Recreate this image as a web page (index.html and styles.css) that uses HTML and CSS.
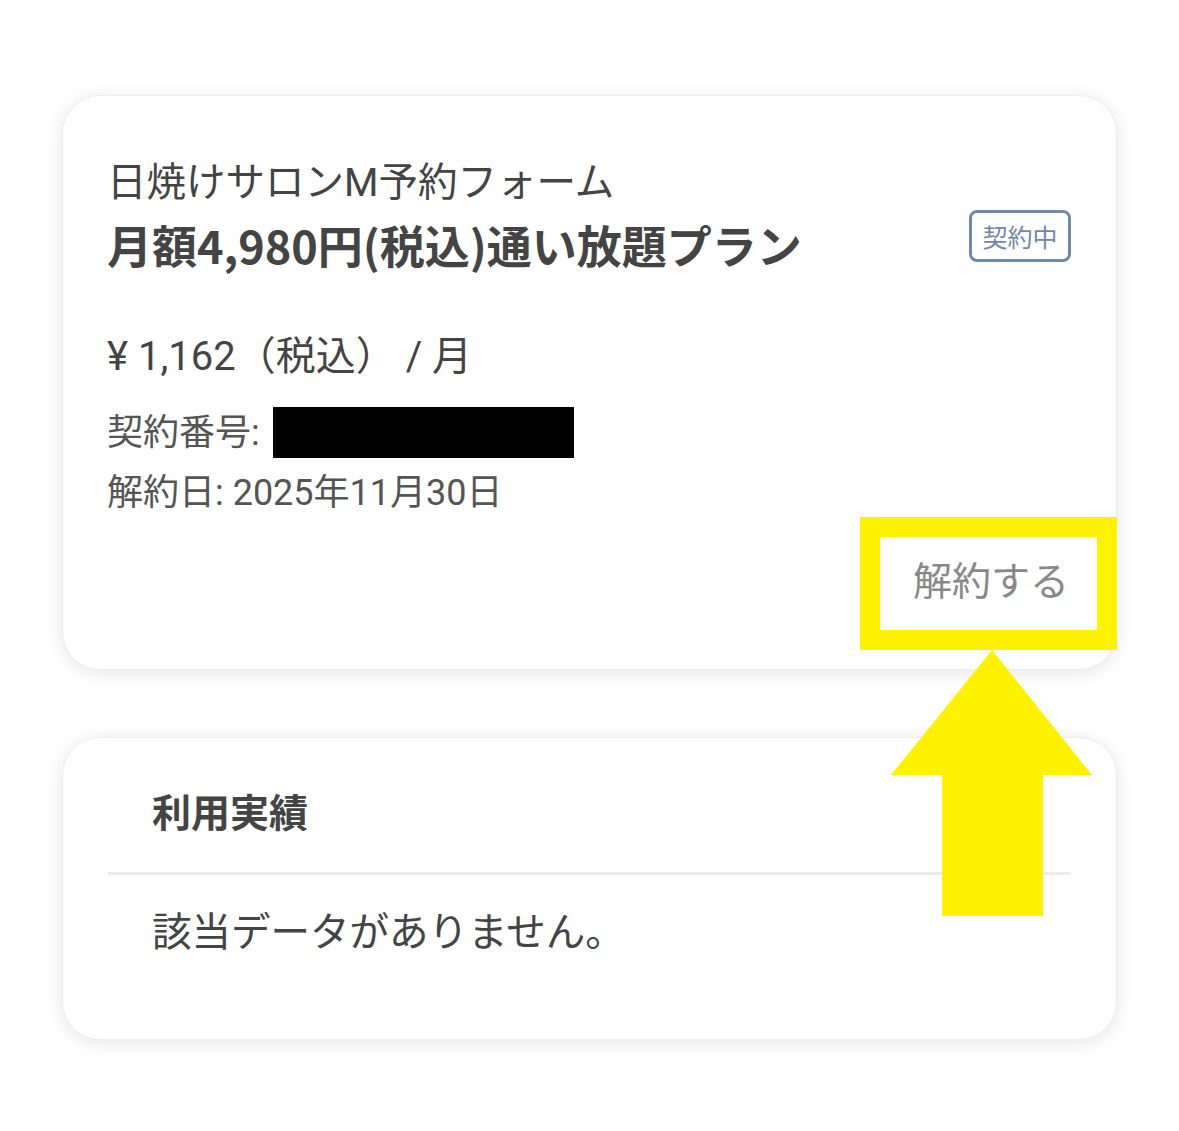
FILE: index.html
```html
<!DOCTYPE html>
<html lang="ja">
<head>
    <meta charset="UTF-8">
    <meta name="viewport" content="width=device-width, initial-scale=1.0">
    <title>契約情報</title>
    <link rel="stylesheet" href="styles.css">
</head>
<body>
    <div class="page">
        <!-- 契約カード -->
        <div class="card contract-card">
            <div class="contract-head">
                <div class="contract-titles">
                    <div class="shop-name">日焼けサロンM予約フォーム</div>
                    <div class="plan-name">月額4,980円(税込)通い放題プラン</div>
                </div>
                <span class="status-badge">契約中</span>
            </div>
            <div class="price">¥ 1,162（税込） / 月</div>
            <div class="info-row number-row">契約番号: <span class="masked"></span></div>
            <div class="info-row">解約日: 2025年11月30日</div>
            <div class="action-row">
                <button class="cancel-button">解約する</button>
            </div>
        </div>

        <!-- 利用実績 -->
        <div class="card history-card">
            <div class="history-title">利用実績</div>
            <div class="history-body">該当データがありません。</div>
        </div>

        <!-- 注釈 -->
        <svg class="annotation" width="1179" height="1131" viewBox="0 0 1179 1131">
            <rect x="870" y="527" width="237" height="113" fill="none" stroke="#fff200" stroke-width="20"/>
            <polygon points="992,650 1092,775 1043,775 1043,916 942,916 942,775 891,775" fill="#fff200"/>
        </svg>
    </div>
</body>
</html>
```

FILE: styles.css
```css
body {
    margin: 0;
    background: #fff;
    font-family: 'Roboto', 'Noto Sans CJK JP', sans-serif;
    color: #444;
}

.page {
    position: relative;
    width: 1179px;
    height: 1131px;
    padding: 95px 62px 0;
    box-sizing: border-box;
}

.card {
    background: #fff;
    border-radius: 38px;
    box-shadow: 0 3px 18px rgba(0, 0, 0, 0.1);
    border: 1px solid #eee;
    box-sizing: border-box;
}

.contract-card {
    height: 575px;
    padding: 63px 45px 0 44px;
}

.contract-head {
    display: flex;
    justify-content: space-between;
    align-items: flex-start;
}

.shop-name {
    font-size: 39.5px;
    line-height: 48px;
    color: #444;
}

.plan-name {
    font-family: 'Noto Sans CJK JP', sans-serif;
    font-weight: 700;
    font-size: 45px;
    line-height: 56px;
    margin-top: 10px;
    color: #444;
}

.status-badge {
    margin-top: 51px;
    border: 3px solid #7189a6;
    border-radius: 8px;
    color: #7189a6;
    font-family: 'Noto Sans CJK JP', sans-serif;
    font-size: 25px;
    line-height: 46px;
    width: 102px;
    box-sizing: border-box;
    text-align: center;
}

.price {
    font-size: 40px;
    line-height: 48px;
    margin-top: 60px;
    color: #444;
}

.info-row {
    font-size: 36px;
    line-height: 44px;
    color: #555;
}

.number-row {
    display: flex;
    align-items: center;
    height: 51px;
    margin-top: 26px;
    white-space: pre;
}

.masked {
    display: inline-block;
    width: 301px;
    height: 51px;
    margin-left: 4px;
    background: #000;
}

.number-row + .info-row {
    margin-top: 13px;
}

.action-row {
    display: flex;
    justify-content: flex-end;
    margin-top: 35px;
}

.cancel-button {
    font-family: 'Noto Sans CJK JP', sans-serif;
    font-size: 39px;
    line-height: 56px;
    color: #888;
    background: none;
    border: none;
    padding: 0 2px 0 0;
    cursor: pointer;
}

.history-card {
    height: 303px;
    margin-top: 67px;
    padding: 48px 45px 0;
}

.history-title {
    font-family: 'Noto Sans CJK JP', sans-serif;
    font-weight: 700;
    font-size: 39px;
    line-height: 48px;
    padding: 0 44px 38px;
    border-bottom: 3px solid #ebebeb;
}

.history-body {
    font-size: 39.5px;
    line-height: 48px;
    padding: 34px 44px 0;
    color: #444;
}

.annotation {
    position: absolute;
    top: 0;
    left: 0;
    pointer-events: none;
}
```
